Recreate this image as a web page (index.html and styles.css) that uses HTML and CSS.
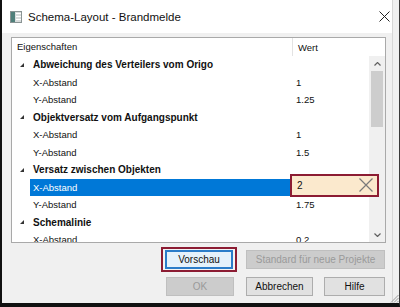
FILE: index.html
```html
<!DOCTYPE html>
<html>
<head>
	<meta charset="UTF-8">
	<title>Schema-Layout - Brandmelde</title>
	<link rel="stylesheet" href="styles.css">
</head>
<body>
	<div class="frame">
		<div class="window">
			<div class="titlebar">
				<svg class="app_icon" width="12" height="12" viewBox="0 0 12 12">
					<rect x="0.5" y="0.5" width="11" height="11" fill="#d8dcdc" stroke="#8a9494"/>
					<rect x="1" y="1" width="4" height="10" fill="#4f7f7a"/>
					<rect x="6" y="2" width="5" height="1" fill="#ffffff"/>
					<rect x="6" y="5" width="5" height="1" fill="#ffffff"/>
					<rect x="6" y="8" width="5" height="1" fill="#ffffff"/>
				</svg>
				<span class="title">Schema-Layout - Brandmelde</span>
				<svg class="close" width="11" height="11" viewBox="0 0 11 11">
					<path d="M0.5 0.5 L10.5 10.5 M10.5 0.5 L0.5 10.5" stroke="#222" stroke-width="1"/>
				</svg>
			</div>

			<div class="content">
				<div class="grid">
					<div class="grid_head">
						<div class="head_name">Eigenschaften</div>
						<div class="head_value">Wert</div>
					</div>
					<div class="grid_body">
						<div class="rows">
							<div class="row group">
								<div class="indent"><span class="arrow"></span></div>
								<div class="label">Abweichung des Verteilers vom Origo</div>
							</div>
							<div class="row">
								<div class="indent"></div>
								<div class="label">X-Abstand</div>
								<div class="value">1</div>
							</div>
							<div class="row">
								<div class="indent"></div>
								<div class="label">Y-Abstand</div>
								<div class="value">1.25</div>
							</div>
							<div class="row group">
								<div class="indent"><span class="arrow"></span></div>
								<div class="label">Objektversatz vom Aufgangspunkt</div>
							</div>
							<div class="row">
								<div class="indent"></div>
								<div class="label">X-Abstand</div>
								<div class="value">1</div>
							</div>
							<div class="row">
								<div class="indent"></div>
								<div class="label">Y-Abstand</div>
								<div class="value">1.5</div>
							</div>
							<div class="row group">
								<div class="indent"><span class="arrow"></span></div>
								<div class="label">Versatz zwischen Objekten</div>
							</div>
							<div class="row selected">
								<div class="indent"></div>
								<div class="label">X-Abstand</div>
								<div class="value">
									<div class="editor">
										<span>2</span>
										<svg width="14" height="14" viewBox="0 0 14 14">
											<path d="M0.5 0.5 L13.5 13.5 M13.5 0.5 L0.5 13.5" stroke="#7a7a7a" stroke-width="1.2"/>
										</svg>
									</div>
								</div>
							</div>
							<div class="row">
								<div class="indent"></div>
								<div class="label">Y-Abstand</div>
								<div class="value">1.75</div>
							</div>
							<div class="row group">
								<div class="indent"><span class="arrow"></span></div>
								<div class="label">Schemalinie</div>
							</div>
							<div class="row">
								<div class="indent"></div>
								<div class="label">X-Abstand</div>
								<div class="value">0.2</div>
							</div>
						</div>
						<div class="scrollbar">
							<div class="sb_btn">
								<svg width="7" height="4" viewBox="0 0 7 4"><path d="M0.5 3.5 L3.5 0.5 L6.5 3.5" fill="none" stroke="#606060" stroke-width="1.2"/></svg>
							</div>
							<div class="sb_track"><div class="sb_thumb"></div></div>
							<div class="sb_btn">
								<svg width="7" height="4" viewBox="0 0 7 4"><path d="M0.5 0.5 L3.5 3.5 L6.5 0.5" fill="none" stroke="#606060" stroke-width="1.2"/></svg>
							</div>
						</div>
					</div>
				</div>

				<div class="buttons">
					<div class="btn_row">
						<div class="marker">
							<button class="btn default">Vorschau</button>
						</div>
						<button class="btn disabled wide">Standard für neue Projekte</button>
					</div>
					<div class="btn_row">
						<button class="btn disabled ok">OK</button>
						<button class="btn cancel">Abbrechen</button>
						<button class="btn help">Hilfe</button>
					</div>
				</div>
			</div>
		</div>
		<svg class="grip" width="9" height="9" viewBox="0 0 9 9">
			<path d="M8.5 1 L1 8.5 M8.5 4 L4 8.5 M8.5 7 L7 8.5" stroke="#9a9a9a" stroke-width="1"/>
		</svg>
	</div>
</body>
</html>
```

FILE: styles.css
```css
body {
	margin: 0;
	padding: 0;
	font-family: "Liberation Sans", Arial, sans-serif;
}

.frame {
	width: 397px;
	height: 303px;
	border-left: 2px solid #111;
	border-right: 1px solid #3a3a3a;
	border-bottom: 4px solid #111;
	background: #f0f0f0;
	display: flex;
	position: relative;
}

.window {
	width: 390px;
	border-right: 1px solid #d6d6d6;
	display: flex;
	flex-direction: column;
}

.titlebar {
	height: 33px;
	background: #fff;
	display: flex;
	align-items: center;
}

.app_icon {
	margin-left: 8px;
}

.title {
	margin-left: 6px;
	font-size: 11.5px;
	color: #111;
}

.close {
	margin-left: auto;
	margin-right: 2px;
}

.content {
	padding: 4px 6px 0 9px;
}

.grid {
	border: 1px solid #a9a9a9;
	background: #fff;
	height: 204px;
	font-size: 9.5px;
	color: #111;
}

.grid_head {
	height: 18px;
	display: flex;
	align-items: center;
}

.head_name {
	width: 275px;
	padding-left: 5px;
	border-right: 1px solid #e3e3e3;
	height: 18px;
	line-height: 18px;
}

.head_value {
	padding-left: 5px;
}

.grid_body {
	height: 186px;
	display: flex;
	overflow: hidden;
}

.rows {
	width: 357px;
}

.row {
	height: 17.5px;
	display: flex;
	align-items: stretch;
	position: relative;
}

.indent {
	width: 18px;
	flex: none;
	display: flex;
	align-items: center;
}

.arrow {
	margin-left: 8px;
	width: 0;
	height: 0;
	border-left: 4px solid transparent;
	border-bottom: 4px solid #333;
}

.label {
	width: 258px;
	padding-left: 3px;
	display: flex;
	align-items: center;
	white-space: nowrap;
}

.group .label {
	font-weight: bold;
	font-size: 10px;
	width: auto;
}

.selected .label {
	background: #0078d7;
	color: #fff;
}

.value {
	padding-left: 5px;
	display: flex;
	align-items: center;
	position: relative;
}

.editor {
	position: absolute;
	left: -1px;
	top: -5px;
	width: 77px;
	height: 19px;
	border: 2px solid #8c1c33;
	background: #fbe9cd;
	display: flex;
	align-items: center;
	justify-content: space-between;
	padding: 0 4px 0 4px;
	box-sizing: content-box;
	z-index: 2;
	font-size: 10px;
}

.editor span {
	padding-left: 1px;
}

.scrollbar {
	width: 16px;
	background: #f0f0f0;
	display: flex;
	flex-direction: column;
}

.sb_btn {
	height: 15px;
	display: flex;
	align-items: center;
	justify-content: center;
}

.sb_track {
	flex: 1;
}

.sb_thumb {
	margin: 0 2px;
	height: 56px;
	background: #cdcdcd;
}

.buttons {
	padding-right: 1px;
}

.btn_row {
	display: flex;
	justify-content: flex-end;
	align-items: center;
}

.btn_row + .btn_row {
	margin-top: 5px;
}

.marker {
	margin-top: 4px;
	border: 2px solid #8c1c33;
	padding: 1px 2px;
	background: #f4f4f4;
}

.btn {
	height: 19px;
	padding: 0;
	font-family: "Liberation Sans", Arial, sans-serif;
	font-size: 10px;
	color: #111;
	background: #e1e1e1;
	border: 1px solid #adadad;
	box-sizing: border-box;
}

.default {
	display: block;
	width: 68px;
	background: #e5f1fb;
	border: 2px solid #2b7cc9;
}

.disabled {
	background: #cccccc;
	border-color: #bfbfbf;
	color: #9a9a9a;
}

.wide {
	width: 139px;
	margin-left: 9px;
	margin-top: 4px;
}

.ok {
	width: 68px;
}

.cancel {
	width: 67px;
	margin-left: 12px;
}

.help {
	width: 61px;
	margin-left: 11px;
}

.grip {
	position: absolute;
	right: 0;
	bottom: 0;
}
```
